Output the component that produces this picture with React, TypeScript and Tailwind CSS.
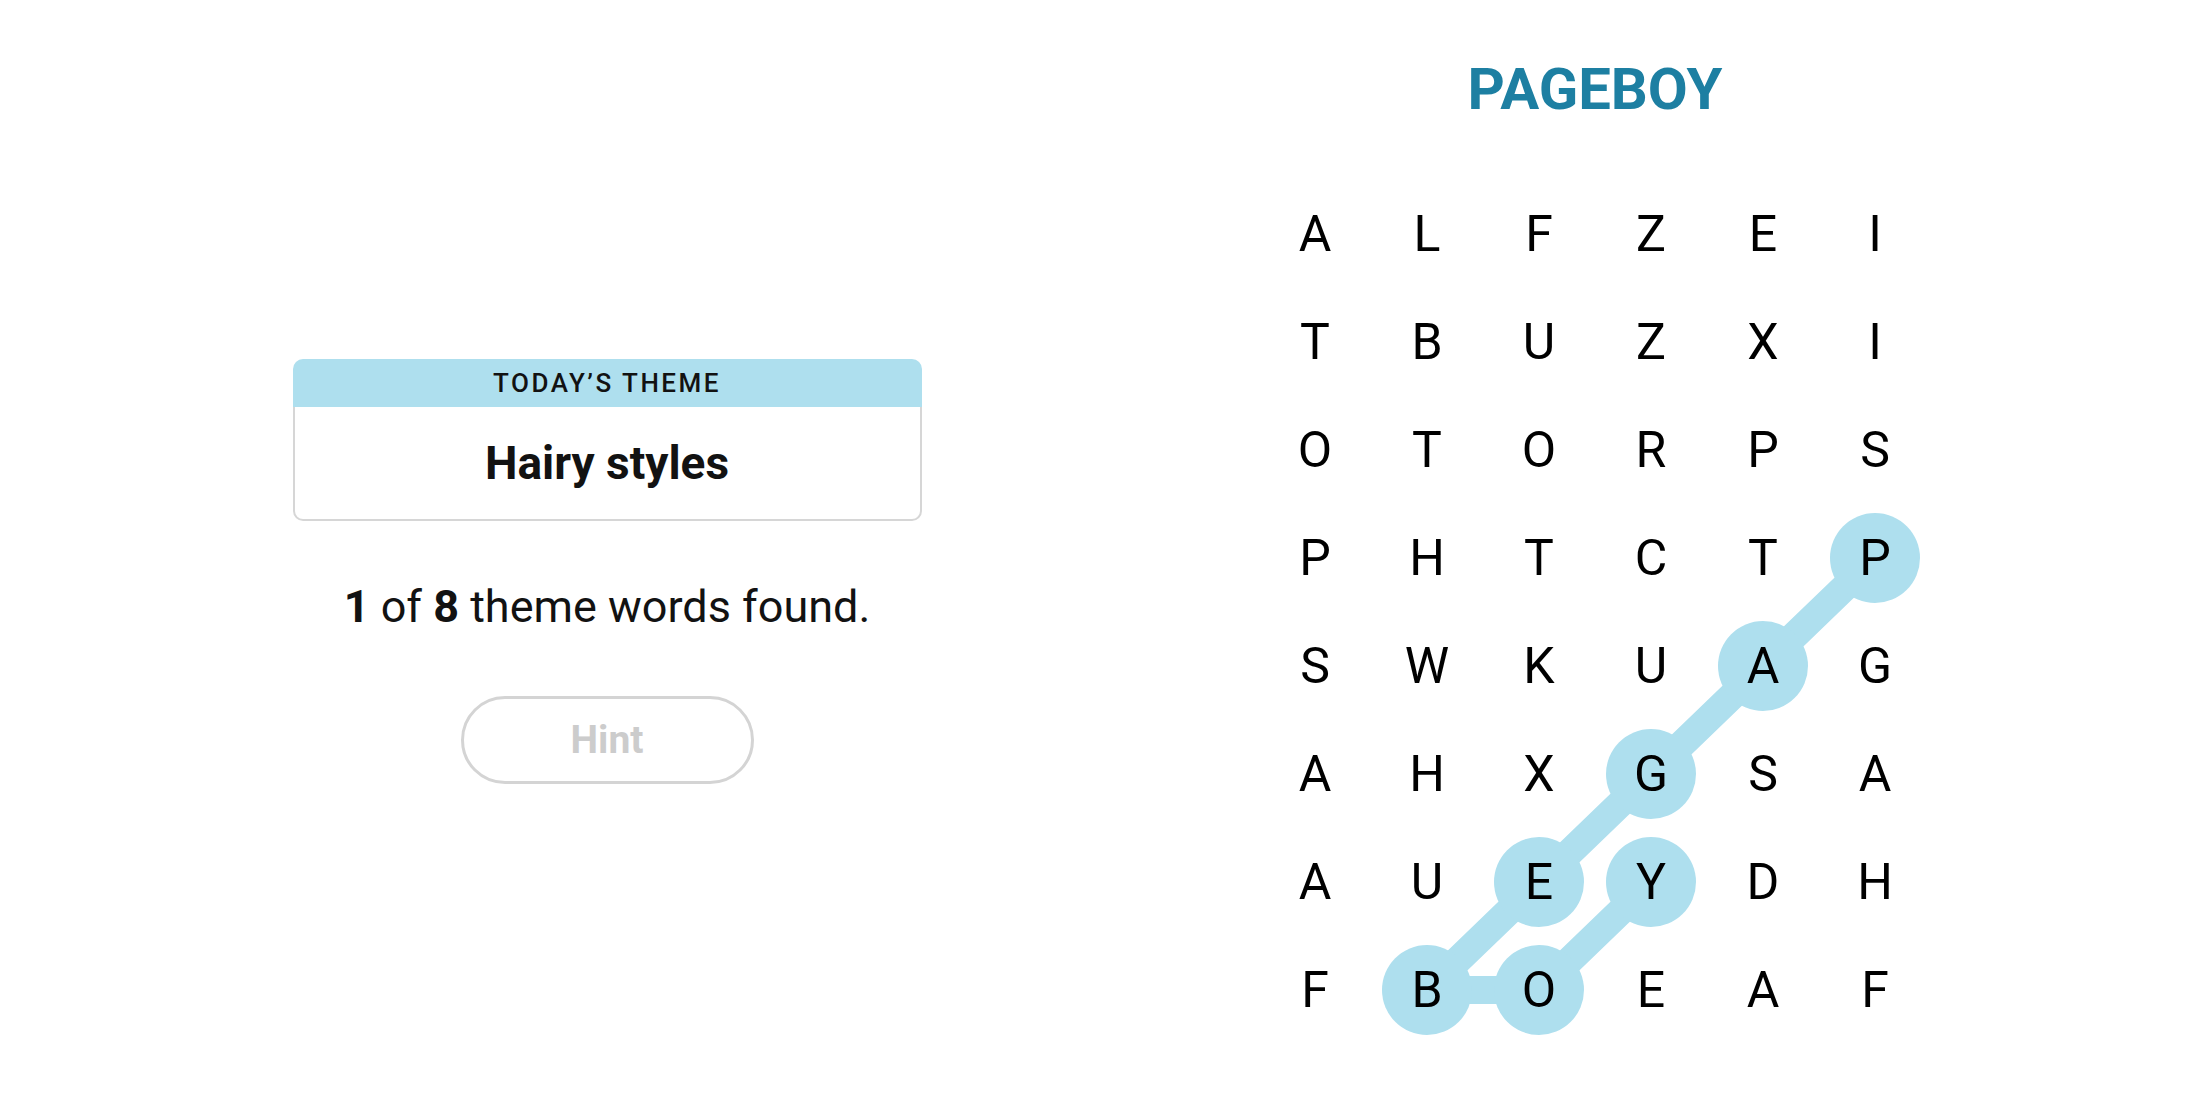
import React from "react";

const grid = [
  "ALFZEI",
  "TBUZXI",
  "OTORPS",
  "PHTCTP",
  "SWKUAG",
  "AHXGSA",
  "AUEYDH",
  "FBOEAF",
];

// found word path: [col, row]
const path: [number, number][] = [
  [5, 3],
  [4, 4],
  [3, 5],
  [2, 6],
  [1, 7],
  [2, 7],
  [3, 6],
];

const CW = 112;
const CH = 108;
const cx = (c: number) => CW / 2 + CW * c;
const cy = (r: number) => CH / 2 + CH * r;

export default function App() {
  return (
    <div
      className="w-[2200px] h-[1100px] bg-white flex text-[#121212]"
      style={{ fontFamily: "Roboto, 'Liberation Sans', sans-serif" }}
    >
      {/* left side: theme + progress */}
      <div className="w-[1214px] flex flex-col items-center pt-[359px]">
        <div className="w-[629px]">
          <div className="h-[48px] bg-[#aedfee] rounded-t-[10px] flex items-center justify-center text-[26px] font-medium tracking-[2.5px]">
            TODAY’S THEME
          </div>
          <div className="h-[114px] border-2 border-t-0 border-[#d6d6d6] rounded-b-[10px] flex items-center justify-center text-[46px] font-bold">
            Hairy styles
          </div>
        </div>
        <p className="mt-[61px] h-[50px] leading-[50px] text-[45px]">
          <span className="font-bold">1</span> of <span className="font-bold">8</span> theme words found.
        </p>
        <button className="mt-[64px] w-[293px] h-[88px] rounded-full border-[3px] border-[#d4d4d4] text-[39px] font-bold text-[#cccccc]">
          Hint
        </button>
      </div>

      {/* right side: board */}
      <div className="w-[762px] flex flex-col items-center">
        <h1 className="mt-[57px] h-[64px] leading-[64px] text-[58px] font-bold text-[#1d7fa2]">PAGEBOY</h1>
        <div className="relative mt-[59px] w-[672px] h-[864px]">
          <svg className="absolute inset-0" width={672} height={864}>
            <polyline
              points={path.map(([c, r]) => `${cx(c)},${cy(r)}`).join(" ")}
              fill="none"
              stroke="#aedfee"
              strokeWidth={28}
              strokeLinejoin="round"
            />
            {path.map(([c, r]) => (
              <circle key={`${c}-${r}`} cx={cx(c)} cy={cy(r)} r={45} fill="#aedfee" />
            ))}
          </svg>
          <div className="relative grid grid-cols-6">
            {grid.map((row, r) =>
              row.split("").map((ch, c) => (
                <div
                  key={`${r}-${c}`}
                  className="w-[112px] h-[108px] flex items-center justify-center text-[50px] text-black"
                >
                  {ch}
                </div>
              ))
            )}
          </div>
        </div>
      </div>
    </div>
  );
}
